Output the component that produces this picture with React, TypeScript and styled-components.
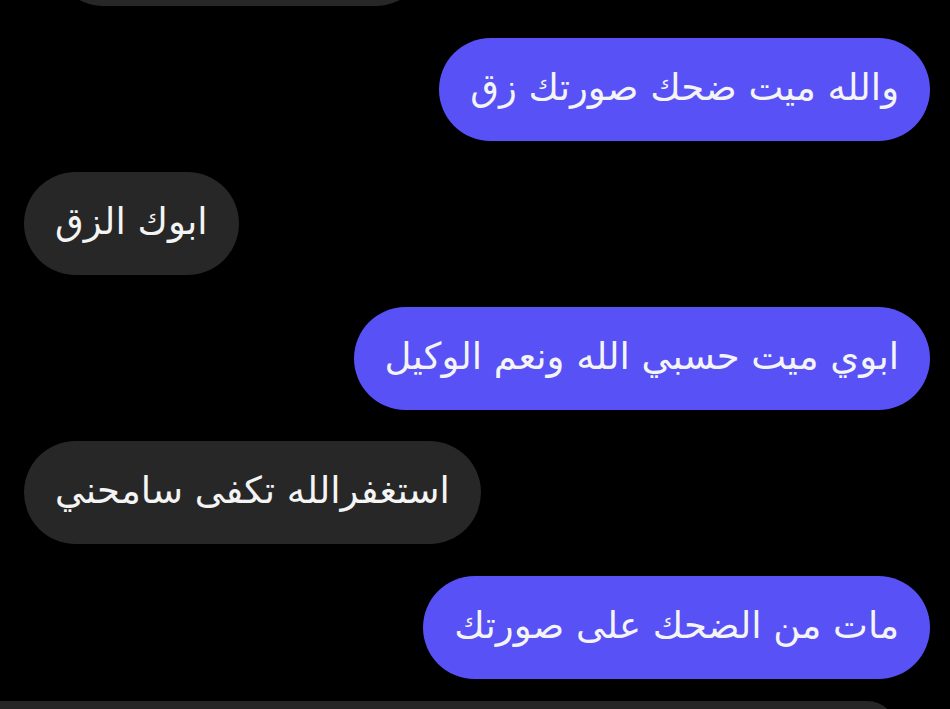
import styled, { createGlobalStyle } from 'styled-components';

const GlobalStyle = createGlobalStyle`
    html, body {
        margin: 0;
        padding: 0;
        background: #000;
        overflow: hidden;
    }
`;

const Screen = styled.div`
    width: 950px;
    height: 709px;
    background: #000;
    overflow: hidden;
    font-family: 'DejaVu Sans', 'Noto Sans', sans-serif;
`;

const Thread = styled.div`
    display: flex;
    flex-direction: column;
    gap: 31.5px;
    padding: 0 20px 0 24px;
    margin-top: -97px;
`;

const Row = styled.div<{ $mine?: boolean }>`
    display: flex;
    justify-content: ${(p) => (p.$mine ? 'flex-end' : 'flex-start')};
`;

const Bubble = styled.div<{ $mine?: boolean }>`
    height: 103px;
    box-sizing: border-box;
    padding: 0 31px 4px;
    border-radius: 52px;
    display: flex;
    align-items: center;
    background: ${(p) => (p.$mine ? '#5751f6' : '#272727')};
    color: #f4f4f4;
    font-size: 37px;
    line-height: 1;
    direction: rtl;
    white-space: nowrap;
`;

const CutBubble = styled.div`
    width: 375px;
    height: 103px;
    margin-left: 28px;
    border-radius: 52px;
    background: #272727;
`;

const Composer = styled.div`
    width: 897px;
    height: 60px;
    margin-top: 22px;
    border-radius: 0 30px 0 0;
    background: #262626;
`;

const messages = [
    { mine: true, text: 'والله ميت ضحك صورتك زق' },
    { mine: false, text: 'ابوك الزق' },
    { mine: true, text: 'ابوي ميت حسبي الله ونعم الوكيل' },
    { mine: false, text: 'استغفرالله تكفى سامحني' },
    { mine: true, text: 'مات من الضحك على صورتك' }
];

export default function App() {
    return (
        <Screen>
            <GlobalStyle />
            <Thread>
                <Row>
                    <CutBubble />
                </Row>
                {messages.map((m, i) => (
                    <Row key={i} $mine={m.mine}>
                        <Bubble $mine={m.mine}>{m.text}</Bubble>
                    </Row>
                ))}
            </Thread>
            <Composer />
        </Screen>
    );
}
